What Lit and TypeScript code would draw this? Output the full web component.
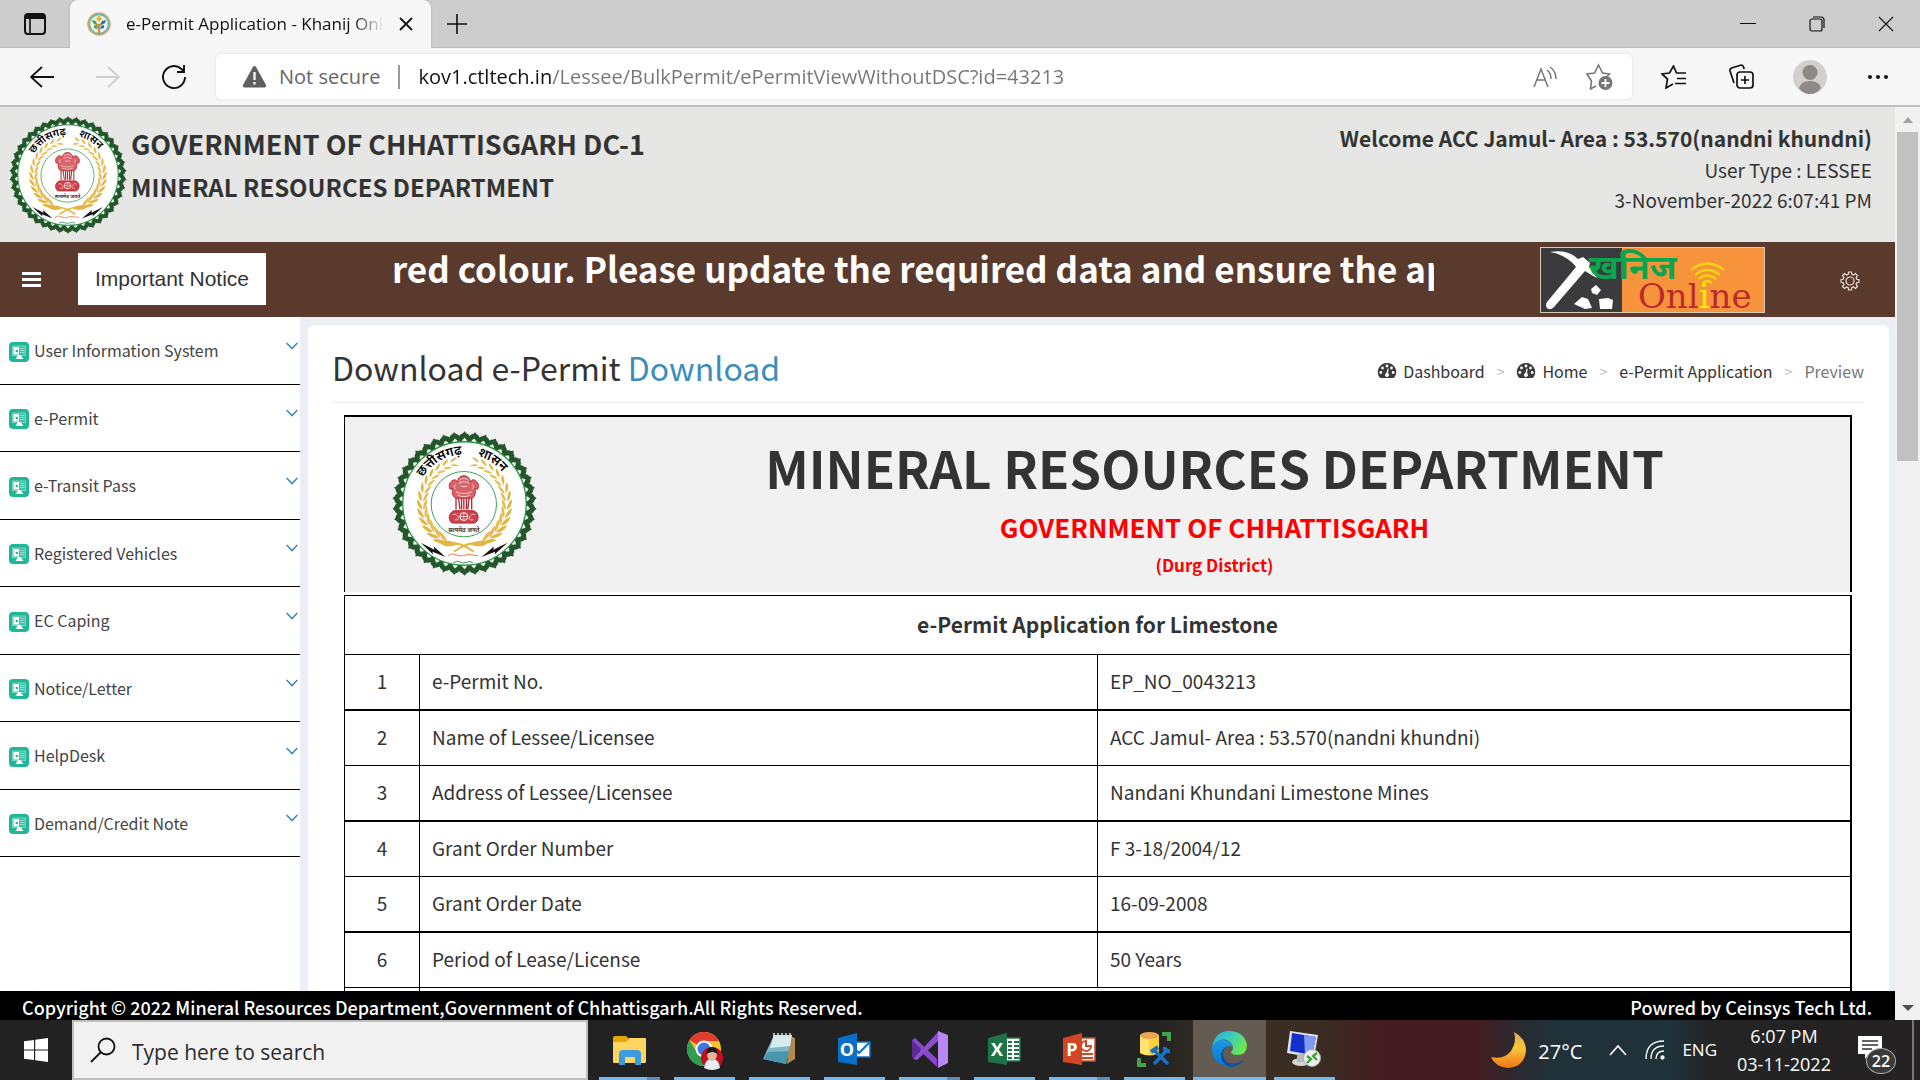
import { LitElement, html, svg, css } from "lit";
import { customElement } from "lit/decorators.js";

const base = css`
  *, *::before, *::after { box-sizing: border-box; }
  button { font: inherit; color: inherit; background: none; border: 0; padding: 0; margin: 0; cursor: pointer; display: flex; align-items: center; justify-content: center; }
  input { font: inherit; border: 0; padding: 0; margin: 0; outline: 0; background: none; min-width: 0; }
  a { color: inherit; text-decoration: none; }
  svg { display: block; flex: none; }
  ul, ol { list-style: none; margin: 0; padding: 0; }
  h1, h2, h3, p { margin: 0; }
`;

/* ---------- State emblem ---------- */

@customElement("state-emblem")
class StateEmblem extends LitElement {
  static styles = css`
    :host { display: block; }
    svg { display: block; width: 100%; height: 100%; }
    .deva { font-family: "Noto Sans Devanagari", "Noto Sans", "DejaVu Sans", sans-serif; }
  `;

  private petals() {
    return Array.from({ length: 42 }, (_, i) => svg`
      <g transform="rotate(${(i * 360) / 42})">
        <path d="M-13,-186 C-21,-196 -19,-211 -5,-215 L0,-221 L5,-215 C19,-211 21,-196 13,-186Z" fill="#23572b"/>
        <path d="M-7,-186 V-194 L0,-201 L7,-194 V-186Z" fill="#eef3ec"/>
      </g>`);
  }

  private wheat(side: number) {
    return Array.from({ length: 13 }, (_, i) => {
      const deg = 14 + i * 11;
      const k = 0.6 + i * 0.035;
      return svg`
        <g transform="scale(${side},1) rotate(${-deg})">
          <path transform="translate(0,-138) rotate(-24) scale(${k})" d="M-22,0 C-12,-9 10,-8 20,0 C10,7 -12,6 -22,0Z" fill="#e3b544"/>
          <path transform="translate(0,-120) rotate(18) scale(${k})" d="M-22,0 C-12,-8 10,-7 20,0 C10,6 -12,6 -22,0Z" fill="#e6bb50"/>
        </g>`;
    });
  }

  render() {
    return html`
      <svg viewBox="-222 -222 444 444" role="img" aria-label="Chhattisgarh state emblem">
        ${this.petals()}
        <circle r="189" fill="#fff" stroke="#2c9447" stroke-width="4"/>
        ${this.wheat(1)}${this.wheat(-1)}
        <circle cx="-2" cy="2" r="100" fill="#fff" stroke="#37a04f" stroke-width="3"/>
        <g fill="none" stroke="#b8252f" stroke-width="3">
          <path d="M-34,-72 C-46,-66 -50,-54 -44,-44 L-36,-46 C-40,-30 -34,-18 -26,-16 H22 C30,-18 36,-30 32,-46 L40,-44 C46,-54 42,-66 30,-72 C24,-74 20,-70 18,-66 C16,-80 6,-85 -2,-85 C-10,-85 -20,-80 -22,-66 C-24,-70 -28,-74 -34,-72Z" fill="#d9636a"/>
          <path d="M-18,-70 Q-2,-84 14,-70 M-18,-62 Q-2,-72 14,-62 M-12,-54 Q-2,-48 8,-54 M-28,-58 Q-36,-50 -28,-44 M24,-58 Q32,-50 24,-44 M-26,-36 Q-2,-24 22,-36 M-22,-26 Q-2,-16 18,-26" stroke="#fff" stroke-width="2"/>
          <path d="M-26,-16 V18 M-18,-16 L-14,18 M-9,-16 V18 M-2,-16 V18 M6,-16 V18 M14,-16 L10,18 M22,-16 V18" stroke-width="4"/>
          <path d="M-32,22 C-52,30 -50,56 -36,60 H30 C44,56 48,30 28,22Z" fill="#cc434b"/>
          <circle cx="-2" cy="40" r="12" stroke="#fff"/>
          <path d="M-36,34 Q-26,28 -20,40 T-30,50 M32,34 Q22,28 16,40 T26,50 M-2,28 V52 M-14,40 H10" stroke="#fff" stroke-width="2"/>
        </g>
        <text class="deva" x="-2" y="88" text-anchor="middle" font-size="19" font-weight="600" fill="#222">सत्यमेव जयते</text>
        <path d="M-76,120 C-60,108 -34,116 -20,124 C-40,136 -66,132 -76,120Z M72,120 C56,108 30,116 16,124 C36,136 62,132 72,120Z" fill="#e3b544"/>
        <path d="M-30,122 Q-4,124 28,148 M26,122 Q0,124 -32,148" fill="none" stroke="#e3b544" stroke-width="6"/>
        <path d="M-134,120 L-92,142 L-94,132 L-58,164 L-98,148 L-96,156Z M132,120 L88,142 L90,132 L52,164 L94,148 L92,156Z" fill="#151515"/>
        <path d="M-50,160 q12,-10 24,-3 t24,2 t24,-2 t20,2" fill="none" stroke="#e37a4e" stroke-width="3"/>
        <path d="M-34,182 q10,-9 20,-3 t20,1 t20,1" fill="none" stroke="#3d8a57" stroke-width="3"/>
        <path id="arc" d="M-129,-78 A151,151 0 0 1 129,-78" fill="none"/>
        <text class="deva" font-size="40" font-weight="600" fill="#000"><textPath href="#arc" startOffset="2">छत्तीसगढ़</textPath></text>
        <text class="deva" font-size="40" font-weight="600" fill="#000"><textPath href="#arc" startOffset="194">शासन</textPath></text>
      </svg>`;
  }
}

/* ---------- Browser chrome ---------- */

@customElement("browser-bar")
class BrowserBar extends LitElement {
  static styles = [base, css`
    :host { display: block; font-family: "Open Sans", "Noto Sans", sans-serif; color: #111; }
    .tabs { display: flex; height: 48px; background: #cdcdcd; align-items: stretch; box-shadow: inset 0 -1px #bdbdbd; }
    .actions { width: 70px; }
    .tab { width: 361px; background: #f7f7f7; border-radius: 8px 8px 0 0; display: flex; align-items: center; gap: 15px; padding: 0 18px 0 17px; box-shadow: 0 0 2px #999; clip-path: inset(0 -2px 0 -2px); }
    .tab-title { flex: 1; font-size: 17px; line-height: 24px; white-space: nowrap; overflow: hidden; -webkit-mask-image: linear-gradient(to right, #000 88%, transparent); mask-image: linear-gradient(to right, #000 88%, transparent); }
    .new { width: 52px; }
    .space { flex: 1; }
    .win { width: 69px; }
    .toolbar { display: flex; align-items: center; height: 59px; background: #f7f7f7; border-bottom: 2px solid #bfbfbf; padding: 0 8px 0 9px; }
    .nav { width: 66px; height: 44px; }
    .address { flex: 1; display: flex; align-items: center; height: 45px; margin: 0 8px 0 9px; padding: 0 6px 0 26px; background: #fff; border-radius: 6px; box-shadow: 0 0 4px #e2e2e2; font-size: 20px; line-height: 28px; }
    .secure { gap: 12px; color: #666; }
    .rule { width: 2px; height: 24px; background: #999; margin: 0 18px; }
    .url { flex: 1; height: 28px; color: transparent; background: linear-gradient(to right, #111 133px, #767676 133px); -webkit-background-clip: text; background-clip: text; }
    .tool { width: 54px; height: 40px; }
    .side { width: 68px; height: 44px; }
  `];

  render() {
    return html`
      <div class="tabs">
        <button class="actions" aria-label="Tab actions">
          <svg width="22" height="22" viewBox="0 0 22 22" fill="none" stroke="#111" stroke-width="2"><rect x="1" y="1" width="20" height="20" rx="3"/><path d="M1 4h20" stroke-width="4"/><path d="M6 5v16" stroke-width="1.6"/></svg>
        </button>
        <div class="tab">
          <svg width="24" height="24" viewBox="0 0 24 24"><circle cx="12" cy="12" r="11" fill="#eaf3e6" stroke="#e8a35f" stroke-width="1.6"/><circle cx="12" cy="12" r="9.6" fill="none" stroke="#57b7bd" stroke-width="1.6"/><path d="M12 21v-9M12 15l-4-4M12 14l4-4" stroke="#d98c3a" stroke-width="2"/><path d="M5 8l4 1 1 4-4-2zM7 13l3 1 1 3-4-1z" fill="#4da34b"/><path d="M19 8l-4 1-1 4 4-2zM17 13l-3 1-1 3 4-1z" fill="#2c69b0"/><path d="M12 3l3 4-3 3-3-3z" fill="#f0b13f"/></svg>
          <span class="tab-title">e-Permit Application - Khanij Online</span>
          <button aria-label="Close tab"><svg width="14" height="14" viewBox="0 0 14 14" stroke="#111" stroke-width="1.8"><path d="M1 1l12 12M13 1L1 13"/></svg></button>
        </div>
        <button class="new" aria-label="New tab"><svg width="22" height="22" viewBox="0 0 22 22" stroke="#111" stroke-width="1.6"><path d="M11 1v20M1 11h20"/></svg></button>
        <div class="space"></div>
        <button class="win" aria-label="Minimize"><svg width="16" height="16" viewBox="0 0 16 16" stroke="#111"><path d="M0 7.5h16"/></svg></button>
        <button class="win" aria-label="Restore"><svg width="16" height="16" viewBox="0 0 16 16" fill="none" stroke="#111" stroke-width="1.2"><rect x="1" y="3" width="12" height="12" rx="2"/><path d="M4 1h8q3 0 3 3v8"/></svg></button>
        <button class="win" aria-label="Close window"><svg width="16" height="16" viewBox="0 0 16 16" stroke="#111" stroke-width="1.1"><path d="M1 1l14 14M15 1L1 15"/></svg></button>
      </div>
      <div class="toolbar">
        <button class="nav" aria-label="Back"><svg width="24" height="22" viewBox="0 0 24 22" fill="none" stroke="#111" stroke-width="1.8"><path d="M24 11H1M12 1L1 11l11 10"/></svg></button>
        <button class="nav" aria-label="Forward"><svg width="24" height="22" viewBox="0 0 24 22" fill="none" stroke="#cfcfcf" stroke-width="1.8"><path d="M0 11h23M12 1l11 10-11 10"/></svg></button>
        <button class="nav" aria-label="Refresh"><svg width="26" height="26" viewBox="0 0 26 26" fill="none" stroke="#111" stroke-width="1.9"><path d="M24 13A11 11 0 1 1 20.500 5L23 7.500M23 1v7h-7"/></svg></button>
        <div class="address">
          <button class="secure">
            <svg width="25" height="23" viewBox="0 0 25 23"><path d="M12.500 1Q13.500 1 14.200 2.200L24 20Q24.800 22.500 22.500 22.500H2.500Q.2 22.500 1 20L10.800 2.200Q11.500 1 12.500 1Z" fill="#5f5f5f"/><path d="M12.500 7v8M12.500 17v2.500" stroke="#fff" stroke-width="2.200"/></svg>
            Not secure
          </button>
          <span class="rule"></span>
          <input class="url" type="text" aria-label="Address" value="kov1.ctltech.in/Lessee/BulkPermit/ePermitViewWithoutDSC?id=43213">
          <button class="tool" aria-label="Read aloud"><svg width="24" height="22" viewBox="0 0 24 22" fill="none" stroke="#767676" stroke-width="1.500"><path d="M1 21L8 3l7 18M4 14h8M14 4q4 3 4 9M17 1q6 4 6 12"/></svg></button>
          <button class="tool" aria-label="Add to favourites"><svg width="27" height="27" viewBox="0 0 27 27" fill="none" stroke="#767676" stroke-width="1.600"><path d="M10 23l-5.500 3 1-8L1 11l7.500-1L12.500 2l4 8 7 1-3 3"/><circle cx="19.500" cy="20" r="7" fill="#767676" stroke="none"/><path d="M19.500 16v8M15.500 20h8" stroke="#fff" stroke-width="1.800"/></svg></button>
        </div>
        <button class="side" aria-label="Favourites"><svg width="26" height="24" viewBox="0 0 26 24" fill="none" stroke="#111" stroke-width="1.700"><path d="M12 19l-7 4 1.500-9L1 9l7.500-1L12.500 1l3 7H25M16 13.500h9M14 18.500h11"/></svg></button>
        <button class="side" aria-label="Collections"><svg width="26" height="26" viewBox="0 0 26 26" fill="none" stroke="#111" stroke-width="1.700"><rect x="8" y="8" width="16" height="16" rx="3"/><path d="M16 12v8M12 16h8M5 19L1 7q-.6-2 1.500-3l9-2.800q2-.5 2.900 1.500l.8 2.300"/></svg></button>
        <button class="side" aria-label="Profile"><svg width="34" height="34" viewBox="0 0 34 34"><circle cx="17" cy="17" r="17" fill="#d3d0cc"/><circle cx="17" cy="12.500" r="7.500" fill="#8d8984"/><path d="M6 28q2-7 11-7t11 7q-4 6-11 6T6 28Z" fill="#8d8984"/></svg></button>
        <button class="side" aria-label="Settings and more"><svg width="20" height="6" viewBox="0 0 20 6" fill="#111"><circle cx="2" cy="3" r="2"/><circle cx="10" cy="3" r="2"/><circle cx="18" cy="3" r="2"/></svg></button>
      </div>`;
  }
}

/* ---------- Desktop taskbar ---------- */

const apps = [
  { name: "File Explorer", stacked: true, art: svg`<path d="M3 9h14l3-1h15q1 0 1 1v23q0 1-1 1H4q-1 0-1-1z" fill="#ffd562"/><path d="M3 8q0-2 2-2h11l3 3-3 3H3z" fill="#e8a400"/><path d="M9 35V24q0-4 4-4h14q4 0 4 4v11h-6v-8H15v8z" fill="#3b9ae0"/>` },
  { name: "Chrome", stacked: false, art: svg`<circle cx="19" cy="19" r="17" fill="#f5c32c"/><path d="M19 19L4.500 10A17 17 0 0 1 34 11H19z" fill="#e33b2e"/><path d="M4.500 10A17 17 0 0 0 18 36l7-13-14-2z" fill="#2f9d4d"/><circle cx="19" cy="19" r="8.500" fill="#fff"/><circle cx="19" cy="19" r="6.500" fill="#3a78e0"/><circle cx="27" cy="28" r="11" fill="#c20f1c"/><path d="M19 38q1-9 8-9t8 9q-8 4-16 0z" fill="#e9eef5"/><ellipse cx="27" cy="25" rx="5" ry="6" fill="#e5b49c"/><path d="M21.500 24q0-7 5.500-7t5.500 7q-5-4-11 0z" fill="#16161c"/>` },
  { name: "Notepad", stacked: false, art: svg`<path d="M30 6l5 2v21l-8 5z" fill="#b08a4e"/><path d="M14 5h18l-6 29L3 29z" fill="#7fb9c6"/><path d="M14 5h18l-2 11-20 2z" fill="#d7ecef"/><path d="M8 22l21-1-3 13L3 29z" fill="#4a97ad"/><path d="M14 3v4M18 3v4M22 3v4M26 3v4M30 3v4" stroke="#ddd" stroke-width="1.500"/>` },
  { name: "Outlook", stacked: false, art: svg`<path d="M18 12h17v15H18z" fill="#fff" stroke="#0b70c6" stroke-width="1.500"/><path d="M18 17l6 6 11-11" fill="none" stroke="#0b70c6" stroke-width="2"/><path d="M3 8l19-5v32L3 32z" fill="#0a70c7"/><text x="12" y="26" text-anchor="middle" font-size="18" font-weight="700" fill="#fff">O</text>` },
  { name: "Visual Studio", stacked: true, art: svg`<path d="M2 10l3-2 22 21v8L2 13z" fill="#8a46c9"/><path d="M2 10v17l3 2 6-10z" fill="#5f2a99"/><path d="M3 29L28 2v9L7 30z" fill="#8c4fd0"/><path d="M28 1l10 4v28l-10 5z" fill="#b887f3"/>` },
  { name: "Excel", stacked: false, art: svg`<path d="M20 8h15v23H20z" fill="#fff" stroke="#1f7246" stroke-width="1.500"/><path d="M23 12h11M23 16h11M23 20h11M23 24h11M23 28h11" stroke="#1f7246" stroke-width="1.800"/><path d="M28 9v21" stroke="#fff" stroke-width="2"/><path d="M3 8l19-5v32L3 32z" fill="#1f7246"/><text x="12" y="26" text-anchor="middle" font-size="18" font-weight="700" fill="#fff">X</text>` },
  { name: "PowerPoint", stacked: true, art: svg`<path d="M20 8h15v23H20z" fill="#fff" stroke="#d24625" stroke-width="1.500"/><path d="M22 24h11M22 28h11" stroke="#d24625" stroke-width="1.800"/><path d="M26 11a5 5 0 1 0 5 5h-5z" fill="none" stroke="#d24625" stroke-width="2"/><path d="M3 8l19-5v32L3 32z" fill="#d24625"/><text x="12" y="26" text-anchor="middle" font-size="18" font-weight="700" fill="#fff">P</text>` },
  { name: "SQL Server Management Studio", stacked: false, art: svg`<path d="M5 5v18q9 5 19 0V5z" fill="#fbd43a"/><path d="M5 5v18q4 2 9 2V5z" fill="#ffe36e"/><ellipse cx="14.500" cy="5.500" rx="9.500" ry="3.500" fill="#eea455"/><path d="M27 4h7v7M4 28v7h7" fill="none" stroke="#47a04a" stroke-width="4"/><path d="M19 34l14-15M20 21l13 13" stroke="#1d6fc4" stroke-width="3.500"/><path d="M16 22l7-5M30 17q-1 5 5 4" stroke="#1d6fc4" stroke-width="4" fill="none"/>` },
  { name: "Edge", stacked: false, active: true, art: svg`<defs><linearGradient id="edge-top" x1="0" y1="0" x2="1" y2=".5"><stop offset="0" stop-color="#2aa9dd"/><stop offset=".5" stop-color="#39c9c4"/><stop offset="1" stop-color="#6be84c"/></linearGradient><linearGradient id="edge-side" x1="0" y1="0" x2="0" y2="1"><stop offset="0" stop-color="#1b9ae0"/><stop offset="1" stop-color="#0b74d4"/></linearGradient></defs>
    <path d="M2 17Q5 1 19 1q15 0 18 14 0 10-10 10-5 0-6-3 4-4 0-9-4-5-11-3-5 2-8 7z" fill="url(#edge-top)"/><path d="M2 18q3-8 11-8 8 0 9 6-8-1-9 8 0 9 9 12-3 1-6 0Q1 32 2 18z" fill="url(#edge-side)"/><path d="M18 16q-7 4-4 12 5 10 20 2-5 7-14 7-10-3-9-13 1-6 7-8z" fill="#12519f"/>` },
  { name: "Remote Desktop", stacked: false, art: svg`<path d="M5 1l28 4-4 23-27-5z" fill="#dfe3ea"/><path d="M7 3l24 4-4 18-22-4z" fill="#1530c9"/><path d="M19 5l12 2-4 18-7-1z" fill="#7f9af0"/><ellipse cx="16" cy="32" rx="9" ry="4" fill="#d5d5d5"/><path d="M12 24h8v8h-8z" fill="#bbb"/><circle cx="27" cy="28" r="8.500" fill="#efefef" stroke="#aaa"/><path d="M22 26l4 3-4 4M32 23l-4 3 4 4" fill="none" stroke="#35a135" stroke-width="2.200"/>` },
];

@customElement("task-bar")
class TaskBar extends LitElement {
  static styles = [base, css`
    :host { display: flex; height: 60px; color: #fff; font-family: "Open Sans", "Noto Sans", sans-serif; background: linear-gradient(to right, #222 0, #222 60%, #3a3024 64%, #3a2c22 69%, #431c21 72%, #431c21 77%, #2a2a30 79%, #1f323a 81%, #1f323a 87%, #242424 89%, #242222 100%); }
    .start { width: 72px; }
    .search { width: 516px; display: flex; align-items: center; gap: 16px; padding: 0 16px; background: #f2f2f2; border: 2px solid #bfbfbf; color: #222; }
    .search input { flex: 1; padding-top: 4px; font-size: 21px; line-height: 30px; }
    .search input::placeholder { color: #2b2b2b; opacity: 1; }
    .apps { display: flex; gap: 2px; margin-left: 5px; }
    .app { width: 73px; flex-direction: column; justify-content: flex-end; gap: 7px; }
    .app.active { background: #645c52; }
    .mark { display: flex; width: 61px; height: 3px; background: #76b9ed; }
    .active .mark { width: 73px; }
    .stacked .mark { border-right: 13px solid #5c8db5; }
    .tray { flex: 1; display: flex; align-items: center; justify-content: flex-end; font-size: 20px; line-height: 28px; }
    .weather { gap: 12px; margin-right: 27px; }
    .weather span { padding-top: 4px; }
    .wifi { margin: 0 17px 0 18px; }
    .lang { font-size: 17px; margin-right: 20px; }
    .clock { flex-direction: column; font-size: 18px; line-height: 28px; width: 94px; white-space: nowrap; }
    .notes { position: relative; width: 40px; height: 44px; margin: 0 15px 0 26px; }
    .notes svg { position: absolute; left: 1px; top: 8px; }
    .badge { position: absolute; right: 1px; top: 20px; width: 30px; height: 26px; border: 1px solid #aaa; border-radius: 50%; background: #3a3a3a; font-size: 16px; font-weight: 600; line-height: 24px; text-align: center; }
    .peek { width: 8px; align-self: stretch; border-left: 2px solid #777; }
  `];

  render() {
    return html`
      <button class="start" aria-label="Start"><svg width="24" height="24" viewBox="0 0 24 24" fill="#fff"><path d="M0 3.200L10 2v9.400H0zM11.200 1.800L24 0v11.400H11.200zM0 12.600h10V22L0 20.800zM11.200 12.600H24V24l-12.800-1.800z"/></svg></button>
      <label class="search">
        <svg width="26" height="26" viewBox="0 0 26 26" fill="none" stroke="#111" stroke-width="1.800"><circle cx="16.500" cy="9.500" r="8"/><path d="M11 15L1 25"/></svg>
        <input type="text" placeholder="Type here to search" aria-label="Search">
      </label>
      <div class="apps">
        ${apps.map((a) => html`
          <button class="app ${a.active ? "active" : ""} ${a.stacked ? "stacked" : ""}" aria-label=${a.name}>
            <svg width="40" height="40" viewBox="0 0 40 40">${a.art}</svg>
            <span class="mark"></span>
          </button>`)}
      </div>
      <div class="tray">
        <button class="weather">
          <svg width="36" height="36" viewBox="0 0 36 36"><defs><linearGradient id="moon" x1="0" y1="0" x2="0" y2="1"><stop offset="0" stop-color="#e0a84a"/><stop offset=".45" stop-color="#fbc53a"/><stop offset="1" stop-color="#ee7416"/></linearGradient></defs><path d="M24 0Q36 6 36 19 34 35 18 36 5 35 1 25q13 3 20-6 6-9 3-19z" fill="url(#moon)"/></svg>
          <span>27°C</span>
        </button>
        <button aria-label="Hidden icons"><svg width="18" height="12" viewBox="0 0 18 12" fill="none" stroke="#fff" stroke-width="1.600"><path d="M1 11l8-9 8 9"/></svg></button>
        <button class="wifi" aria-label="Network"><svg width="20" height="20" viewBox="0 0 20 20" fill="none" stroke="#fff" stroke-width="1.300"><path d="M1 19Q1 1 19 1M6 19Q6 6 19 6M11 19q0-8 8-8"/><circle cx="17.500" cy="17.500" r="1.500" fill="#fff"/></svg></button>
        <button class="lang">ENG</button>
        <button class="clock"><span>6:07 PM</span><span>03-11-2022</span></button>
        <button class="notes" aria-label="22 notifications">
          <svg width="24" height="24" viewBox="0 0 24 24"><path d="M0 0h24v18H11l-4 5v-5H0z" fill="#fff"/><path d="M4 5h16M4 9h16M4 13h10" stroke="#333" stroke-width="1.500"/></svg>
          <span class="badge">22</span>
        </button>
        <div class="peek"></div>
      </div>`;
  }
}

/* ---------- Portal page ---------- */

const menu = ["User Information System", "e-Permit", "e-Transit Pass", "Registered Vehicles", "EC Caping", "Notice/Letter", "HelpDesk", "Demand/Credit Note"];

const rows = [
  ["1", "e-Permit No.", "EP_NO_0043213"],
  ["2", "Name of Lessee/Licensee", "ACC Jamul- Area : 53.570(nandni khundni)"],
  ["3", "Address of Lessee/Licensee", "Nandani Khundani Limestone Mines"],
  ["4", "Grant Order Number", "F 3-18/2004/12"],
  ["5", "Grant Order Date", "16-09-2008"],
  ["6", "Period of Lease/License", "50 Years"],
];

const gauge = svg`<path d="M10 2a9 9 0 0 0-7.500 14.200q.4.800 1.300.8h12.400q.9 0 1.300-.8A9 9 0 0 0 10 2z" fill="#3a3a3a"/><g fill="#fff"><circle cx="3.800" cy="11.500" r="1.400"/><circle cx="5.500" cy="7" r="1.400"/><circle cx="10" cy="5" r="1.400"/><circle cx="14.500" cy="7" r="1.400"/><circle cx="16.200" cy="11.500" r="1.400"/><path d="M10.600 7.500l1.100.3-.7 4.400a2 2 0 1 1-1.500-.2z"/></g>`;

@customElement("app-root")
class AppRoot extends LitElement {
  static styles = [base, css`
    :host { display: flex; flex-direction: column; height: 100vh; overflow: hidden; background: #fff; color: #333; font-family: "Noto Sans CJK SC", "Open Sans", sans-serif; font-size: 16px; line-height: 24px; }
    browser-bar, task-bar { flex: none; }
    .view { flex: 1; min-height: 0; display: flex; }
    .page { flex: 1; min-width: 0; display: flex; flex-direction: column; }
    .scroll { width: 25px; background: #f1f1f1; display: flex; flex-direction: column; align-items: center; justify-content: space-between; }
    .scroll-top { display: flex; flex-direction: column; align-items: center; gap: 9px; padding-top: 10px; }
    .thumb { width: 21px; height: 329px; background: #c1c1c1; }
    .scroll-end { padding-bottom: 9px; }

    .banner { display: flex; justify-content: space-between; height: 135px; padding: 9px 23px 0 9px; background: #e6e6e4; }
    .brand { display: flex; gap: 4px; }
    .brand state-emblem { width: 118px; height: 118px; }
    .brand-text { padding-top: 8px; font-weight: 700; }
    .brand-text h1 { font-size: 27px; line-height: 40px; }
    .brand-text h2 { font-size: 24px; line-height: 46px; }
    .user { text-align: right; padding-top: 5px; font-size: 19px; line-height: 30px; }
    .user strong { display: block; font-size: 21px; line-height: 34px; }

    .bar { display: flex; align-items: center; height: 75px; padding: 0 34px 0 12px; background: #593a2d; color: #fff; }
    .burger { width: 39px; height: 39px; margin-right: 27px; }
    .notice { width: 188px; height: 52px; margin-bottom: 2px; background: #fff; color: #333; font-family: "Liberation Sans", Arial, sans-serif; font-size: 21px; }
    .ticker { flex: 1; min-width: 0; align-self: flex-start; margin: 0 106px 0 126px; overflow: hidden; white-space: nowrap; font-size: 35px; line-height: 52px; font-weight: 700; }
    .gear { width: 22px; height: 22px; margin: 2px 0 0 74px; }
    .logo { width: 225px; height: 66px; }
    .deva { font-family: "Noto Sans Devanagari", "Noto Sans", "DejaVu Sans", sans-serif; }
    .slab { font-family: "DejaVu Serif", serif; }

    .body { flex: 1; min-height: 0; display: flex; background: #ebeef4; overflow: hidden; }
    .menu { width: 300px; background: #fff; }
    .menu ul { display: flex; flex-direction: column; height: 540px; }
    .menu li { flex: 1; display: flex; border-bottom: 1px solid #000; }
    .menu a { flex: 1; display: flex; align-items: center; gap: 5px; padding: 0 2px 0 9px; color: #444; }
    .menu .icon { margin-top: 3px; }
    .menu .arrow { margin: 0 0 9px auto; }
    .content { flex: 1; min-width: 0; margin: 8px 6px 0 8px; padding: 0 25px 0 24px; background: #fff; border-radius: 6px 6px 0 0; }
    .head { display: flex; align-items: center; justify-content: space-between; height: 78px; padding-top: 6px; border-bottom: 1px solid #eee; }
    .head h2 { font-size: 32px; line-height: 44px; font-weight: 400; }
    .head h2 span { color: #3c8dbc; }
    .crumbs { display: flex; align-items: center; gap: 12px; padding-top: 8px; }
    .crumbs a { display: flex; align-items: center; gap: 6px; }
    .crumbs .sep { color: #bbb; font-size: 14px; }
    .crumbs .here { color: #777; }

    .permit { margin: 12px 12px 0; }
    .cover { display: flex; align-items: flex-start; height: 177px; background: #f1f1f1; border: solid #000; border-width: 2px 2px 0 1px; margin-bottom: 3px; }
    .cover state-emblem { width: 145px; height: 147px; margin: 13px 42px 0 47px; }
    .cover-text { flex: 1; padding-top: 15px; text-align: center; font-weight: 700; color: red; }
    .cover-text h1 { font-size: 51px; line-height: 70px; color: #333; }
    .cover-text p { font-size: 26px; line-height: 50px; }
    .cover-text .district { font-size: 17px; line-height: 26px; }

    table { width: 100%; table-layout: fixed; border-collapse: separate; border-spacing: 0; border: solid #000; border-width: 1px 2px 0 1px; font-size: 19px; line-height: 24px; }
    .c-num { width: 74px; }
    .c-label { width: 678px; }
    th, td { padding: 14px 12px 16px; text-align: left; border-bottom: 1px solid #000; vertical-align: middle; }
    td + td { border-left: 1px solid #000; }
    tr:nth-child(odd) td { border-bottom-width: 2px; }
    td:first-child { text-align: center; }
    th { padding: 16px 12px 18px; text-align: center; font-size: 21px; font-weight: 700; }

    .foot { display: flex; justify-content: space-between; height: 29px; padding: 2px 23px 0 22px; overflow: hidden; background: #000; color: #fff; font-size: 18px; line-height: 28px; font-weight: 500; }
  `];

  render() {
    return html`
      <browser-bar></browser-bar>
      <div class="view">
        <div class="page">
          <header class="banner">
            <div class="brand">
              <state-emblem></state-emblem>
              <div class="brand-text"><h1>GOVERNMENT OF CHHATTISGARH DC-1</h1><h2>MINERAL RESOURCES DEPARTMENT</h2></div>
            </div>
            <div class="user">
              <strong>Welcome ACC Jamul- Area : 53.570(nandni khundni)</strong>
              <div>User Type : LESSEE</div>
              <div>3-November-2022 6:07:41 PM</div>
            </div>
          </header>
          <nav class="bar">
            <button class="burger" aria-label="Toggle menu"><svg width="19" height="15" viewBox="0 0 19 15" fill="#fff"><path d="M0 0h19v3H0zM0 6h19v3H0zM0 12h19v3H0z"/></svg></button>
            <button class="notice">Important Notice</button>
            <div class="ticker">red colour. Please update the required data and ensure the app</div>
            ${this.logo()}
            <button class="gear" aria-label="Settings">
              <svg width="20" height="20" viewBox="0 0 20 20" fill="none" stroke="#e8e0dc" stroke-width="1.200"><circle cx="10" cy="10" r="4"/><path d="M8.600 1h2.800l.4 2.300 1.700.7 2-1.400 2 2-1.400 2 .7 1.700 2.200.4v2.600l-2.200.4-.7 1.700 1.400 2-2 2-2-1.400-1.700.7-.4 2.300H8.600l-.4-2.300-1.700-.7-2 1.400-2-2 1.400-2-.7-1.700L1 11.300V8.700l2.200-.4.700-1.700-1.400-2 2-2 2 1.400 1.700-.7z"/></svg>
            </button>
          </nav>
          <div class="body">
            <aside class="menu">
              <ul>
                ${menu.map((m) => html`<li><a href="#">
                  <svg class="icon" width="20" height="20" viewBox="0 0 20 20"><rect width="20" height="20" rx="4" fill="#20b799"/><rect x="3.500" y="4" width="13" height="9.500" fill="#3fc2a8" stroke="#8fdccd" stroke-width=".8"/><path d="M4.500 5H10v7.500H4.500z" fill="#fff"/><path d="M11 6.500h4.500M11 8.500h4.500M11 10.500h4.500" stroke="#a9e6da" stroke-width=".8"/><circle cx="7.800" cy="9" r="1.300" fill="#20b799"/><path d="M9 13h2.500l3 4h-8z" fill="#fff"/></svg>
                  ${m}
                  <svg class="arrow" width="12" height="8" viewBox="0 0 12 8" fill="none" stroke="#3c8dbc" stroke-width="1.600"><path d="M.6 1L6 6.600 11.400 1"/></svg>
                </a></li>`)}
              </ul>
            </aside>
            <main class="content">
              <div class="head">
                <h2>Download e-Permit <span>Download</span></h2>
                <nav class="crumbs">
                  <a href="#"><svg width="20" height="19" viewBox="0 0 20 19">${gauge}</svg>Dashboard</a><span class="sep">&gt;</span>
                  <a href="#"><svg width="20" height="19" viewBox="0 0 20 19">${gauge}</svg>Home</a><span class="sep">&gt;</span>
                  <a href="#">e-Permit Application</a><span class="sep">&gt;</span>
                  <span class="here">Preview</span>
                </nav>
              </div>
              <section class="permit">
                <div class="cover">
                  <state-emblem></state-emblem>
                  <div class="cover-text">
                    <h1>MINERAL RESOURCES DEPARTMENT</h1>
                    <p>GOVERNMENT OF CHHATTISGARH</p>
                    <p class="district">(Durg District)</p>
                  </div>
                </div>
                <table>
                  <colgroup><col class="c-num"><col class="c-label"><col></colgroup>
                  <thead><tr><th colspan="3">e-Permit Application for Limestone</th></tr></thead>
                  <tbody>
                    ${rows.map((r) => html`<tr>${r.map((c) => html`<td>${c}</td>`)}</tr>`)}
                    <tr><td></td><td colspan="2"></td></tr>
                  </tbody>
                </table>
              </section>
            </main>
          </div>
          <footer class="foot">
            <span>Copyright © 2022 Mineral Resources Department,Government of Chhattisgarh.All Rights Reserved.</span>
            <span>Powred by Ceinsys Tech Ltd.</span>
          </footer>
        </div>
        <div class="scroll">
          <div class="scroll-top">
            <svg width="10" height="6" viewBox="0 0 10 6"><path d="M0 6l5-6 5 6z" fill="#a3a3a3"/></svg>
            <div class="thumb"></div>
          </div>
          <div class="scroll-end"><svg width="12" height="6" viewBox="0 0 12 6"><path d="M0 0h12L6 6z" fill="#505050"/></svg></div>
        </div>
      </div>
      <task-bar></task-bar>`;
  }

  private logo() {
    return html`
      <svg class="logo" viewBox="0 0 225 66" role="img" aria-label="Khanij Online">
        <rect width="225" height="66" fill="#f7943b"/>
        <rect width="82" height="66" fill="#3b3b3d"/>
        <rect x=".5" y=".5" width="224" height="65" fill="none" stroke="#d8c9b8"/>
        <path d="M10 5Q28 2 38 12l5-2 7 6-1 4q6 7 8 11-6-3-12-7L14 60q-4 4-7 1-2-3 0-6L36 20Q27 8 10 5z" fill="#fff"/>
        <path d="M51 42l5-4 5 5-4 5-5-2zM34 57l8-7 6 2 4 9-7 1zM59 52l9-1 5 2-1 9-12 0z" fill="#fff"/>
        <path d="M151 23q16-13 33 0M155 28q12-10 25 0M159 32q8-7 17 0M163 36q4-4 9 0" fill="none" stroke="#f3d50f" stroke-width="2.200"/>
        <text class="deva" x="49" y="32" font-size="34" font-weight="700" fill="#0aa64f">खनिज</text>
        <text class="slab" x="98" y="61" font-size="34" fill="#bb2a2c">Onl<tspan fill="#fdf000">i</tspan>ne</text>
      </svg>`;
  }
}
